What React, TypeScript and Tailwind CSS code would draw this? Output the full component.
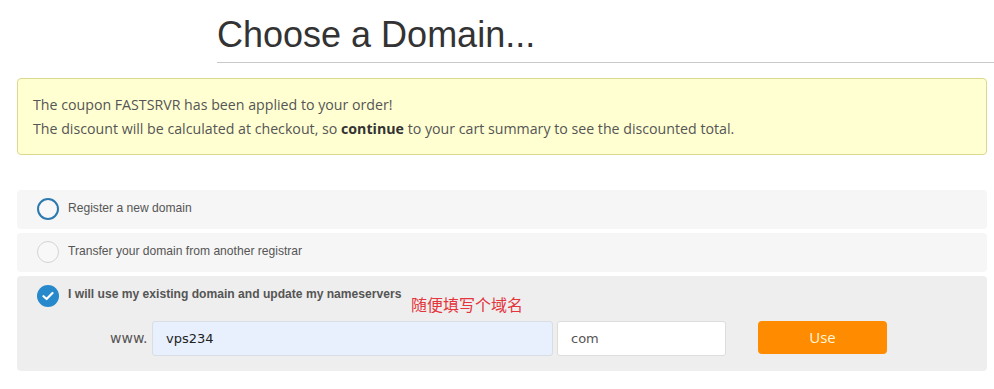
export default function App() {
  return (
    <div className="w-[994px] h-[389px] bg-white overflow-hidden font-['Open_Sans',sans-serif]">
      <div className="ml-[217px] pt-[14px] border-b border-[#c8c8c8] pb-[6px]">
        <h1 className="font-['Liberation_Sans',Arial,sans-serif] text-[36px] leading-[42px] text-[#333]">
          Choose a Domain...
        </h1>
      </div>

      <div className="ml-[17px] mr-[7px] mt-[15px] rounded-[4px] border border-[#ddd88f] bg-[#ffffd2] px-[15px] pt-[14px] pb-[13px] text-[14.2px] leading-[24px] text-[#555]">
        <p>The coupon FASTSRVR has been applied to your order!</p>
        <p>
          The discount will be calculated at checkout, so <b className="text-[#333]">continue</b> to your cart summary to see the discounted total.
        </p>
      </div>

      <div className="ml-[17px] mr-[7px] mt-[35px] flex flex-col gap-[4px] font-['Liberation_Sans',Arial,sans-serif] text-[12.1px] text-[#555]">
        <label className="flex h-[39px] items-center gap-[9px] rounded-[4px] bg-[#f6f6f6] pl-[20px] pb-[2px]">
          <span className="h-[22px] w-[22px] rounded-full border-2 border-[#2d7ab0] bg-[#f8f8f8]" />
          Register a new domain
        </label>
        <label className="flex h-[39px] items-center gap-[9px] rounded-[4px] bg-[#f6f6f6] pl-[20px] pb-[2px]">
          <span className="h-[22px] w-[22px] rounded-full border border-[#d4d4d4] bg-[#f8f8f8]" />
          Transfer your domain from another registrar
        </label>
        <div className="relative h-[95px] rounded-[4px] bg-[#eeeeee] pl-[20px] pt-[9px]">
          <div className="flex h-[22px] items-center gap-[9px]">
            <span className="flex h-[22px] w-[22px] items-center justify-center rounded-full bg-[#2589cc]">
              <svg width="12" height="10" viewBox="0 0 12 10">
                <path d="M1.5 5.2 L4.6 8 L10.5 2" fill="none" stroke="white" strokeWidth="2.2" strokeLinecap="round" strokeLinejoin="round" />
              </svg>
            </span>
            <span className="font-bold -mt-[4px]">I will use my existing domain and update my nameservers</span>
          </div>
          <span className="absolute left-[394px] top-[18px] font-['Noto_Sans_CJK_SC',sans-serif] text-[16px] leading-[20px] text-[#e4343c]">
            随便填写个域名
          </span>
          <div className="mt-[14px] flex items-start font-['DejaVu_Sans',Verdana,sans-serif] text-[13px]">
            <span className="ml-[73px] flex h-[35px] w-[42px] items-center text-[14px] text-[#555]">www.</span>
            <div className="flex h-[35px] w-[401px] items-center rounded-[3px] border border-[#d8dde6] bg-[#e8f0fe] pl-[13px] text-[#222]">
              vps234
            </div>
            <div className="ml-[4px] flex h-[35px] w-[169px] items-center rounded-[3px] border border-[#ddd] bg-white pl-[13px] text-[#555]">
              com
            </div>
            <button className="ml-[32px] h-[33px] w-[129px] rounded-[4px] bg-[#ff8c00] font-['Open_Sans',sans-serif] text-[15px] text-[#fff6dc]">
              Use
            </button>
          </div>
        </div>
      </div>
    </div>
  );
}
